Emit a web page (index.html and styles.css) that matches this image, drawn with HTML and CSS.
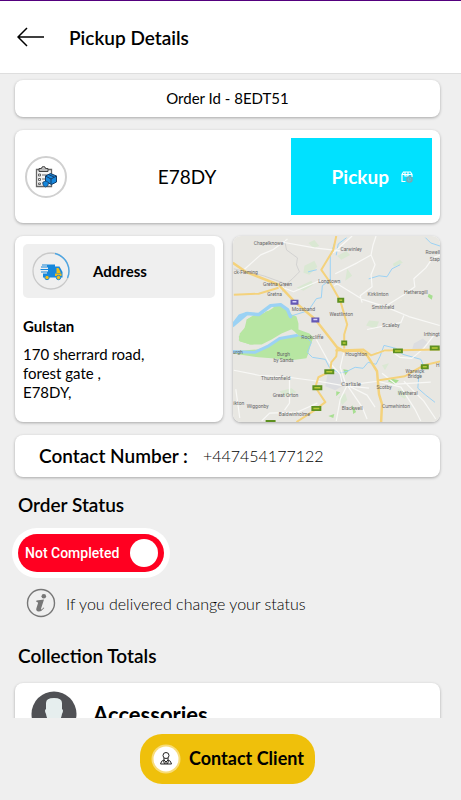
FILE: index.html
```html
<!DOCTYPE html>
<html lang="en">
<head>
<meta charset="utf-8">
<meta name="viewport" content="width=device-width, initial-scale=1">
<title>Pickup Details</title>
<link rel="stylesheet" href="styles.css">
</head>
<body>
<header class="topbar">
  <button class="back" type="button" aria-label="Back">
    <svg width="28" height="20" viewBox="0 0 28 20" fill="none" stroke="#000" stroke-width="1.5"><path d="M10 1L1 10l9 9M1 10h26"/></svg>
  </button>
  <h1>Pickup Details</h1>
</header>

<main class="content">
  <section class="card order-id">Order Id - 8EDT51</section>

  <section class="card pickup">
    <span class="ring">
      <svg width="24" height="24" viewBox="0 0 24 24">
        <path d="M2.500 4.500h15v17h-15z" fill="#f4f4f4" stroke="#666" stroke-width="1.300"/>
        <path d="M5 3.500h2.500a2 2 0 0 1 4 0H14v3H5z" fill="#bbb" stroke="#444"/>
        <path d="M4.500 9h2v2h-2zM4.500 13.500h2v2h-2zM4.500 18h2v1.500h-2zM8 10h6M8 14h4M8 18h3" fill="none" stroke="#666"/>
        <path d="M11.500 11l5-2.500 6 2.500v6l-5 2.500-6-3z" fill="#1687dc" stroke="#153c66"/>
        <path d="M11.500 11l5.500 3 5.500-3M17 14v5M14.500 9.500l5.500 2.500" fill="none" stroke="#153c66"/>
        <path d="M9 17l3-1 2.500 1.500-.5 3-2.500 1.500L9 20z" fill="#1687dc" stroke="#153c66" stroke-width=".7"/>
      </svg>
    </span>
    <span class="postcode">E78DY</span>
    <button class="pickup-btn" type="button">Pickup
      <svg width="12" height="12" viewBox="0 0 12 12" fill="none"><path d="M4.500 10.500H1V3.500L2.500 1h7L11 3.500V6M1 3.500h10M4 1v4h3V1" stroke="#fff" stroke-width="1.200"/><circle cx="8.500" cy="8.500" r="2.600" fill="#52c8dc" stroke="#7ba4b0" stroke-width="1.300"/><path d="M8.500 7v1.800h1.300" stroke="#7ba4b0"/></svg>
    </button>
  </section>

  <div class="location">
    <section class="card address">
      <div class="address-head">
        <svg width="38" height="38" viewBox="0 0 38 38">
          <circle cx="19" cy="19" r="18" fill="none" stroke="#c9c9c9" stroke-width="1.300"/>
          <path d="M23 1.500A18 18 0 0 1 35.500 26" fill="none" stroke="#4ba6e5" stroke-width="1.300"/>
          <path d="M10 12.500h13v13H11v-4h4v-1H9v-1h7v-1.500H8.500v-1H16v-1.500H9v-1h6v-1h-5z" fill="#1687dc"/>
          <path d="M23 14.500h4.500l3 5.500v5.500H23z" fill="#1687dc"/><path d="M24.500 16h2l2 4v1h-4z" fill="#f3bd17"/><path d="M23 21.500h6.500v2.500H23z" fill="#f3bd17"/>
          <circle cx="15" cy="25.500" r="2.200" fill="#f3bd17" stroke="#1687dc"/><circle cx="26.500" cy="25.500" r="2.200" fill="#f3bd17" stroke="#1687dc"/>
        </svg>
        <h2>Address</h2>
      </div>
      <h3>Gulstan</h3>
      <p>170 sherrard road,<br>forest gate ,<br>E78DY,</p>
    </section>

    <section class="card map" aria-label="Map">
      <svg viewBox="0 0 209 187" preserveAspectRatio="xMidYMid slice">
        <rect width="209" height="187" fill="#e8e7e2"/>
        <g fill="#dae8d3">
          <path d="M72 30l10-5 3 6-8 8-6-2zM64 52l15-7 2 4-10 6zM76 7l6-3 5 6-6 2zM137 85l10 1-3 7-10-3zM105 20l9-5 4 4-9 5zM161 28l7-4 3 3-9 4zM115 33l5 7-7 5zM47 156l12-3 5 4-12 4zM166 154l12 3-5 7-8-5zM106 162l7-4 2 7-5 5zM150 130l7-2-4 7z"/>
        </g>
        <g fill="#dcdde0"><path d="M182 108l9-5 5 4-7 7-9 1zM95 140l12-3 6 12-10 6-10-4z"/></g>
        <path d="M14 84l8-5 8 1 3-4 6-1 3-5 7-2 7 6 1 4 7 3 2 7v6l11 4 4 4-3 8-2 8-2 5-15 2-20-2-13-1-27-4v-2l26-2 12-4 12-8 17-2-4-4-4-3-12 3-12 8-14 5H18l-11-3-1-5 5-5z" fill="#b7e6a2"/>
        <path d="M7 98l7-8v-6l8-4 11-3 13-8 10 7 6 10-1 7-12 5-10 6-10 5H17l-11-4z" fill="#b7e6a2"/>
        <g fill="#a7df91"><path d="M158 143l9 2-4 4-7-3zM111 134l6 1-4 5zM197 58l4 2-1 4-4-3zM120 170l4 7-3 2zM104 156l4 1-4 4zM96 181l6-2-1 4z"/></g>
        <g fill="none" stroke="#9bd2f4" stroke-linecap="round" stroke-linejoin="round">
          <path d="M0 90l14-12 12 1 12-9 10-1 7 5 3 7" stroke-width="3.500"/>
          <path d="M1 88l12-10-6 2zM0 116l22 1 13-6 12-8 17-3" stroke-width="3"/>
          <path d="M64 100l10 2 5 5-4 10 5 5 13 2 4 8 10 6 8-2 8-4 8 1 5-6 8 2 4-8 4-11 12 3 7 6 18 5 3 7-5 10-1 12 8 7 9 7" stroke-width="1"/>
          <path d="M60 80l16-5 8-12 5-1 1-12 8-6V20l5-15M76 36l8-2M137 43l10-3 8 1 5-8 8-4M104 19l2-11 8-6M194 2l5 5 9 3" stroke-width="1"/>
        </g>
        <path d="M52 4l2 10 11 8-1 7 3 7-7 7-7 6-3 7M1 33l30 7 22 8" fill="none" stroke="#ccc" stroke-width=".8"/>
        <g fill="none" stroke="#f8f8f6" stroke-width="1.200" stroke-linejoin="round">
          <path d="M10 35l18-16 12-5 15-11M46 50l15 6 26-11h13l31 19 22 7 24 10 31 9M107 45l-5 5M103 38l22-11 14-8 2-10 3-9M139 19l4 10-4 10 1 12-12 9 2 7M153 71l19-12 11-8-1-8 12-11 7-10 8-3M135 94l34-7 3-7M49 6l33 6 26 3M101 17l11-10 8-7"/>
          <path d="M1 135l25 5 30 2 30 4 22 4 29 3M57 143v25l-5 7M3 154l4 29M29 186l8-8 28-1 20-9M84 104l12 22 12 13 2 9M114 150l-6-18 4-17M115 150l20 10 8 12M115 150l-7 14-4 22M115 150l15 22 5 12M115 150l31-4 23 6 14 22 6 12M145 117l13-2 10 7 12 1 12-10 10-13M172 146l20 20 12 18M150 138l14 11 35-2"/>
        </g>
        <g fill="none" stroke="#f4d27c" stroke-width="2" stroke-linejoin="round">
          <path d="M0 27l13 9 33 13 16 17 21 18 22 28 7 4 15-1 8 5 10 16 2 23 3 10-1 20" stroke-width="2.500"/>
          <path d="M1 59l25-1 20-6M104 0l-3 14-12 20 7 10 8 14 4 7 7 24-3 10v14M103 115l28-1 8 6 14-5 56-1M147 145l26-4 10-6 9-5 17-4M105 113l-1 8-5 6-1 9-12 6-3 10 10 15-9 7-20 13"/>
        </g>
        <g fill="#5e9020"><path d="M105 62h7v5h-7zM92 134h10v5H92zM80 150h10v5H80zM79 171h10v5H79zM33 185h10v2H33zM109 105h6v5h-6zM161 113h10v5h-10zM198 110h10v5h-10zM189 129h8v5h-8z"/></g>
        <path d="M107 64.500h3M94 136.500h6M82 152.500h6M81 173.500h6M110.500 107.500h3M163 115.500h6M200 112.500h6M191 131.500h4" stroke="#b9cb39" stroke-width="1.500"/>
        <path d="M58 64h8v5h-8zM79 82h8v5h-8z" fill="#6558b5"/><path d="M60 66h4M81 84h4" stroke="#d9d4ff" stroke-width="1.500"/>
        <g class="places">
          <text x="36" y="9">Chapelknowe</text><text x="13" y="38">ck-Fleming</text><text x="45" y="50">Gretna Green</text><text x="42" y="60">Gretna</text><text x="71" y="75">Mossband</text><text x="97" y="47">Longtown</text><text x="109" y="80">Westlinton</text><text x="119" y="15">Carwinley</text><text x="201" y="18">Rowell</text><text x="203" y="25">Stap</text><text x="146" y="60">Kirklinton</text><text x="184" y="58">Hethersgill</text><text x="151" y="73">Smithfield</text><text x="159" y="91">Scaleby</text>
          <text x="80" y="104">Rockcliffe</text><text x="5" y="119">urgh</text><text x="51" y="121">Burgh</text><text x="51" y="127">by Sands</text><text x="43" y="145">Thurstonfield</text><text x="53" y="162">Great Orton</text><text x="6" y="170">ikton</text><text x="25" y="173">Wiggonby</text><text x="62" y="181">Baldwinholme</text><text x="124" y="121">Houghton</text><text x="200" y="101">Irthingt</text><text x="183" y="138">Warwick</text><text x="183" y="143">Bridge</text><text class="city" x="119" y="151">Carlisle</text><text x="152" y="154">Scotby</text><text x="176" y="160">Wetheral</text><text x="164" y="173">Cumwhinton</text><text x="120" y="175">Blackwell</text><text x="206" y="132">H</text>
        </g>
      </svg>
    </section>
  </div>

  <section class="card contact"><strong>Contact Number :</strong><span>+447454177122</span></section>

  <h2 class="section-title">Order Status</h2>
  <label class="toggle">
    <input type="checkbox" role="switch">
    <span class="track"><span class="state">Not Completed</span><span class="knob"></span></span>
  </label>
  <p class="hint">
    <svg width="30" height="30" viewBox="0 0 30 30"><circle cx="15" cy="15" r="13.500" fill="none" stroke="#777" stroke-width="1.400"/><circle cx="17.800" cy="8.200" r="2.300" fill="#777"/><path d="M10.500 12.500l7.500-1-2.900 9q-.3 1.200.4 1 .8-.2 2.100-1.900l.7.500Q15.500 23.700 12.700 23.500q-3.200-.3-2.300-3.200l1.600-5q.4-1.600-1.800-1.600z" fill="#777"/></svg>
    If you delivered change your status
  </p>

  <h2 class="section-title totals">Collection Totals</h2>
  <section class="card item">
    <svg width="46" height="46" viewBox="0 0 46 46"><circle cx="23" cy="23" r="22.500" fill="#505155"/><path d="M15 12q0-5 8-5t8 5v6q2 1 0 5-1 6-4 8v3q9 2 11 5-6 6-15 6T8 39q2-3 11-5v-3q-3-2-4-8-2-4 0-5z" fill="#e6eeee"/></svg>
    <h3>Accessories</h3>
  </section>
</main>

<footer class="bottom">
  <button class="client" type="button">
    <svg width="30" height="30" viewBox="0 0 30 30"><circle cx="15" cy="15" r="14.500" fill="#f8dc78"/><circle cx="15" cy="15" r="12.500" fill="#fff"/><g fill="none" stroke="#222"><circle cx="15" cy="11.500" r="3"/><path d="M13 14v2l2 2 2-2v-2M13 16q-3 .5-3.500 4h11q-.5-3.500-3.500-4M15 18v2M12.500 16.500l1 3.500M17.500 16.500l-1 3.500"/></g></svg>
    <span>Contact Client</span>
  </button>
</footer>
</body>
</html>
```
FILE: styles.css
```css
* { box-sizing: border-box; }
h1, h2, h3, p { margin: 0; }
body {
  margin: 0;
  height: 100vh;
  display: flex;
  flex-direction: column;
  background: #efefef;
  color: #000;
  font-family: Lato, "Liberation Sans", sans-serif;
  font-size: 16px;
  font-weight: 300;
}
button { border: 0; padding: 0; font: inherit; color: inherit; cursor: pointer; }
svg { flex: none; display: block; }

.topbar {
  flex: none;
  display: flex;
  align-items: center;
  gap: 24px;
  height: 74px;
  padding: 0 17px;
  background: #fff;
  border-top: 1px solid #54007e;
  border-bottom: 1px solid #dedede;
}
.back { background: none; }
.topbar h1 { font-size: 19px; font-weight: 600; }

.content {
  flex: 1;
  min-height: 0;
  overflow-y: auto;
  scrollbar-width: none;
  padding: 6px 21px 20px 15px;
}
.card {
  background: #fff;
  border-radius: 8px;
  box-shadow: 0 1px 3px rgba(0, 0, 0, .3);
}
.order-id { padding: 9px 8px; line-height: 19px; text-align: center; margin-bottom: 13px; font-size: 15px; font-weight: 400; }

.pickup {
  display: grid;
  grid-template-columns: 42px 1fr 141px;
  align-items: center;
  padding: 8px 8px 8px 10px;
  margin-bottom: 13px;
}
.ring {
  display: grid;
  place-items: center;
  width: 42px;
  height: 42px;
  border: 2px solid #d0d0d0;
  border-radius: 50%;
}
.postcode { padding-left: 16px; text-align: center; font-size: 19px; font-weight: 400; }
.pickup-btn {
  display: flex;
  align-items: center;
  justify-content: flex-end;
  gap: 12px;
  height: 77px;
  padding-right: 19px;
  background: #00e1ff;
  color: #fff;
  font-size: 19px;
  font-weight: 700;
}

.location { display: grid; grid-template-columns: 1fr 1fr; gap: 10px; margin-bottom: 13px; }
.address { padding: 8px 8px 20px; }
.address-head {
  display: flex;
  align-items: center;
  gap: 23px;
  padding: 8px 9px;
  background: #efefef;
  border-radius: 5px;
}
.address h2, .address h3 { font-size: 15px; line-height: 20px; font-weight: 700; }
.address h3 { margin: 18px 0 9px; }
.address p { line-height: 19px; font-size: 15px; font-weight: 400; }
.map { position: relative; overflow: hidden; }
.map svg { position: absolute; inset: 0; width: 100%; height: 100%; }
.places { font-family: Roboto, sans-serif; font-size: 5px; font-weight: 400; fill: #666; text-anchor: middle; }
.places .city { font-size: 6px; }

.contact {
  display: flex;
  align-items: center;
  gap: 15px;
  min-height: 42px;
  padding: 9px 24px;
  line-height: 24px;
  margin-bottom: 16px;
}
.contact strong { font-size: 19px; font-weight: 600; }

.section-title { padding-left: 3px; font-size: 19px; line-height: 24px; font-weight: 600; }
.toggle {
  display: block;
  width: fit-content;
  margin: 11px 0 10px -3px;
  padding: 6px;
  background: #fff;
  border-radius: 25px;
  cursor: pointer;
}
.toggle input { position: absolute; opacity: 0; }
.track {
  display: flex;
  align-items: center;
  gap: 11px;
  height: 38px;
  padding: 0 6px 0 7px;
  border-radius: 19px;
  background: #ff0021;
}
.state { color: #fff; font: 500 14px Roboto, sans-serif; }
.knob { width: 28px; height: 28px; border-radius: 50%; background: #fff; }
.hint { display: flex; align-items: center; gap: 10px; padding-left: 11px; }
.totals { margin: 26px 0 15px; }
.item { display: flex; align-items: center; gap: 16px; padding: 8px 16px; }
.item h3 { font-size: 22px; font-weight: 700; }

.bottom {
  flex: none;
  display: flex;
  justify-content: center;
  padding: 16px 21px 16px 15px;
}
.client {
  display: flex;
  align-items: center;
  gap: 8px;
  height: 50px;
  padding: 0 11px;
  border-radius: 22px;
  background: #efc00b;
  font-size: 18px;
  font-weight: 700;
}
.client span { padding-bottom: 3px; }
```
